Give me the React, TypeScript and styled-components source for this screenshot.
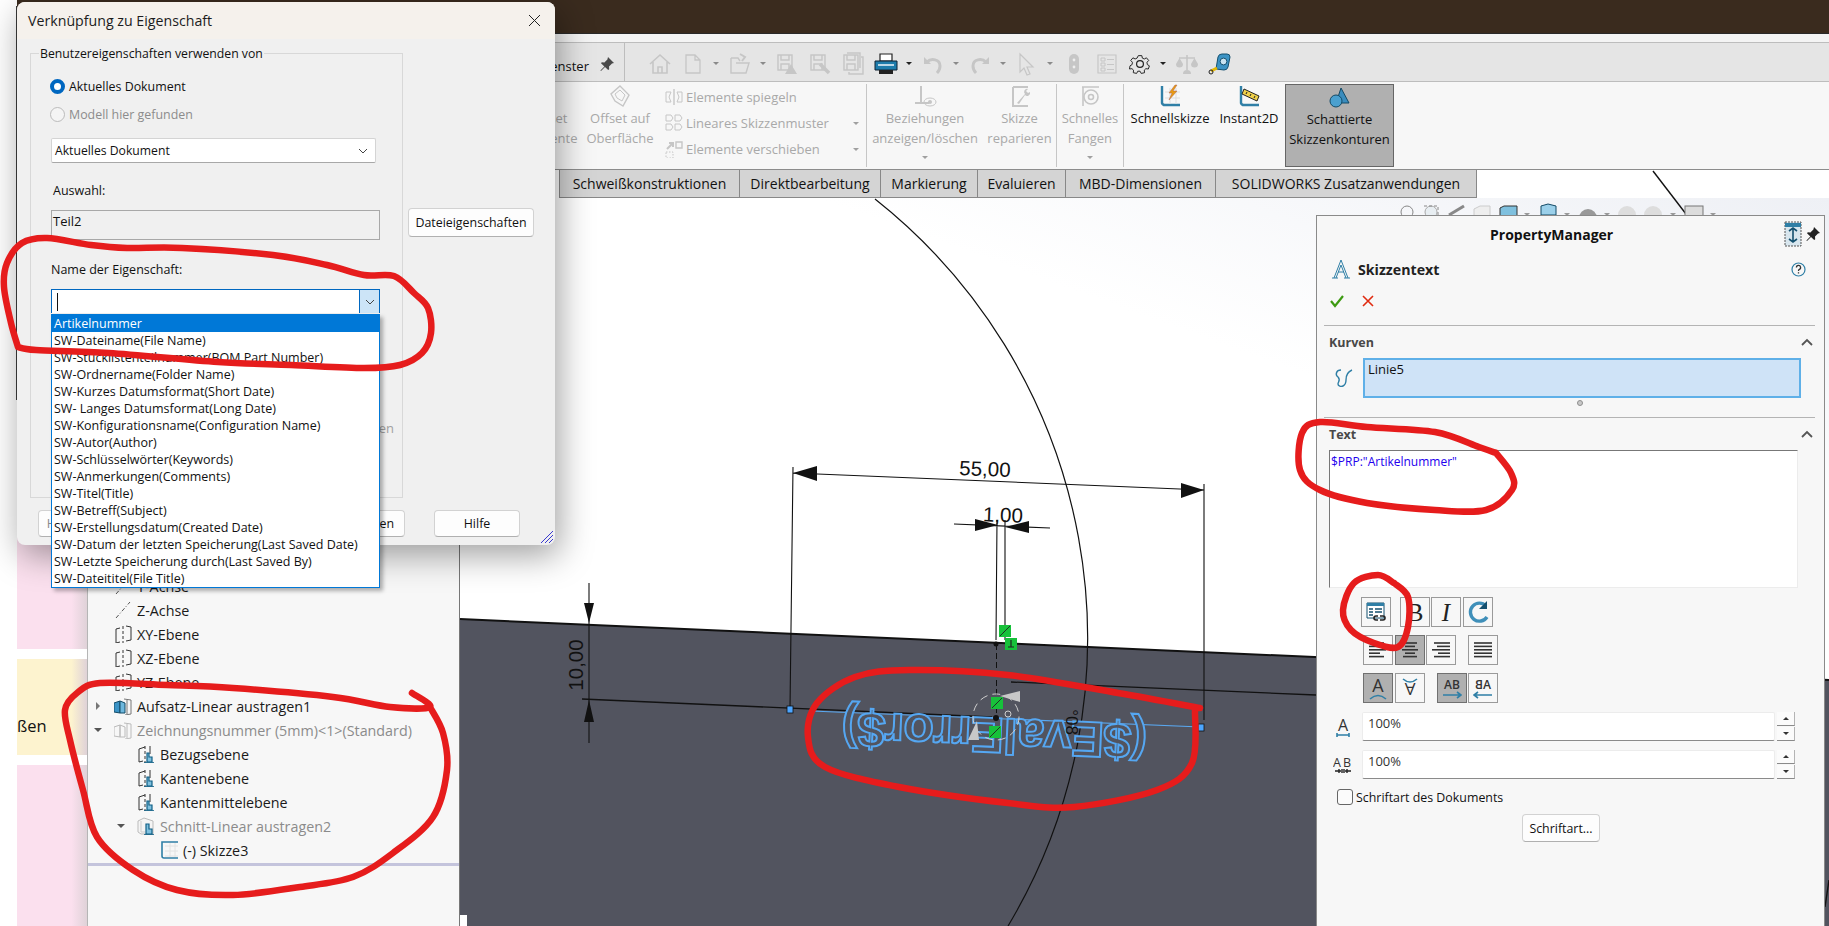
import React from 'react';
import styled, { createGlobalStyle } from 'styled-components';

const UI_FONT = `"Open Sans", "Noto Sans", sans-serif`;

const GlobalStyle = createGlobalStyle`
  html, body { margin: 0; padding: 0; background: #fff; }
  * { box-sizing: border-box; }
`;

const Page = styled.div`
  position: relative;
  display: flex;
  width: 1829px;
  height: 926px;
  overflow: hidden;
  background: #fff;
  font-family: ${UI_FONT};
  font-size: 13px;
  color: #111;
`;

const Margin = styled.div`
  flex: 0 0 17px;
  background: #fff;
`;

const Workspace = styled.div`
  flex: 1;
  display: flex;
  flex-direction: column;
  min-width: 0;
`;

const TopBar = styled.div`
  flex: 0 0 34px;
  background: #3a2b1e;
  border-bottom: 1px solid #2a2a2a;
`;

const Strip = styled.div`
  flex: 0 0 9px;
  background: #f4f4f4;
  border-bottom: 1px solid #bdbdbd;
`;

const QuickBar = styled.div`
  flex: 0 0 39px;
  display: flex;
  align-items: center;
  background: #e5e5e5;
  border-bottom: 1px solid #bdbdbd;
  padding: 3px 0 0 520px;
`;

const QuickLabel = styled.span`
  width: 52px;
  margin-top: 4px;
  text-align: right;
  white-space: nowrap;
  font-size: 13px;
`;

const PinSlot = styled.span`
  display: flex;
  justify-content: center;
  width: 35px;
`;

const QuickDivider = styled.span`
  align-self: stretch;
  width: 1px;
  margin: -3px 18px 0 0;
  background: #bdbdbd;
`;

const QuickSlot = styled.span`
  flex: 0 0 33px;
  display: flex;
  justify-content: center;
`;

const CaretSlot = styled.span<{ $color?: string }>`
  flex: 0 0 14px;
  display: flex;
  justify-content: center;
  &::before {
    content: '';
    border-left: 3px solid transparent;
    border-right: 3px solid transparent;
    border-top: 3px solid ${(p) => p.$color || '#8a8a8a'};
  }
`;

const Ribbon = styled.div`
  flex: 0 0 88px;
  display: flex;
  background: #f7f7f7;
  padding: 2px 0 0 501px;
  border-bottom: 1px solid #8c8c8c;
`;

const ToolButton = styled.div<{ $w: number; $sep?: boolean; $active?: boolean; $off?: boolean }>`
  flex: 0 0 ${(p) => p.$w}px;
  display: flex;
  flex-direction: column;
  align-items: center;
  height: 83px;
  text-align: center;
  line-height: 20px;
  font-size: 13px;
  white-space: nowrap;
  color: ${(p) => (p.$off ? '#a9a9a9' : '#111')};
  border-right: ${(p) => (p.$sep ? '1px solid #c6c6c6' : 'none')};
  ${(p) => p.$active && `
    background: #b0b0b0;
    border: 1px solid #666;
    margin-left: 3px;
  `}
`;

const ToolIcon = styled.div`
  height: 24px;
  display: flex;
  align-items: center;
  justify-content: center;
  flex-shrink: 0;
`;

const ToolCaret = styled.span`
  margin-top: 8px;
  border-left: 3px solid transparent;
  border-right: 3px solid transparent;
  border-top: 3px solid #a0a0a0;
`;

const ToolList = styled.div`
  flex: 0 0 207px;
  height: 83px;
  padding-left: 2px;
  border-right: 1px solid #c6c6c6;
`;

const ToolListRow = styled.div`
  display: flex;
  align-items: center;
  height: 26px;
  color: #a9a9a9;
  font-size: 13px;
  white-space: nowrap;
`;

const ToolListIcon = styled.span`
  flex: 0 0 24px;
  display: flex;
  justify-content: center;
`;

const ToolListText = styled.span`
  flex: 1;
`;

const ToolListCaret = styled.span`
  margin-right: 7px;
  border-left: 3px solid transparent;
  border-right: 3px solid transparent;
  border-top: 3px solid #a0a0a0;
`;

const TabStrip = styled.div`
  flex: 0 0 28px;
  display: flex;
  padding-left: 542px;
  background: #fff;
`;

const Tab = styled.div`
  display: flex;
  align-items: center;
  justify-content: center;
  background: #d4d4d4;
  border-left: 1px solid #888;
  border-bottom: 1px solid #888;
  font-size: 14px;
  white-space: nowrap;
  &:last-child { border-right: 1px solid #888; }
`;

const Body = styled.div`
  flex: 1;
  display: flex;
  min-height: 0;
`;

const LeftRail = styled.div`
  flex: 0 0 70px;
  display: flex;
  flex-direction: column;
  gap: 10px;
  background: #fff;
`;

const RailCard = styled.div<{ $h: number; $bg: string }>`
  flex: 0 0 ${(p) => p.$h}px;
  display: flex;
  align-items: center;
  overflow: hidden;
  background: linear-gradient(to right, ${(p) => p.$bg} 78%, #dfd2d8 100%);
`;

const RailText = styled.span`
  margin-top: 36px;
  font-size: 16.5px;
`;

const Tree = styled.div`
  flex: 0 0 373px;
  display: flex;
  flex-direction: column;
  padding-top: 376px;
  background: #f7f7f7;
  border-left: 1px solid #b5b5b5;
  border-right: 1px solid #777;
`;

const TreeRow = styled.div<{ $level?: number; $off?: boolean }>`
  display: flex;
  align-items: center;
  flex: 0 0 24px;
  padding-left: ${(p) => 4 + (p.$level || 0) * 23}px;
  font-size: 14.3px;
  white-space: nowrap;
  color: ${(p) => (p.$off ? '#8b8b8b' : '#1a1a1a')};
`;

const TreeArrow = styled.span<{ $open?: boolean; $hidden?: boolean }>`
  flex: 0 0 12px;
  display: flex;
  justify-content: center;
  margin-right: 10px;
  &::before {
    content: '';
    visibility: ${(p) => (p.$hidden ? 'hidden' : 'visible')};
    ${(p) => p.$open
      ? 'border-left: 4px solid transparent; border-right: 4px solid transparent; border-top: 4px solid #555;'
      : 'border-top: 4px solid transparent; border-bottom: 4px solid transparent; border-left: 4px solid #777;'}
  }
`;

const TreeIconSlot = styled.span`
  flex: 0 0 18px;
  display: flex;
  justify-content: center;
  margin-right: 5px;
`;

const TreeRule = styled.div`
  flex: 0 0 3px;
  margin-top: 1px;
  background: #c4c4dc;
`;

const CanvasArea = styled.div`
  flex: 1;
  background: linear-gradient(200deg, #eef0f5 0%, #fff 30%);
`;

const Drawing = styled.svg`
  position: absolute;
  left: 0;
  top: 0;
  pointer-events: none;
`;

/* floating PropertyManager over the graphics area */
const PropertyPanel = styled.aside`
  position: absolute;
  left: 1316px;
  top: 215px;
  width: 509px;
  height: 711px;
  display: flex;
  flex-direction: column;
  background: #f7f7f7;
  border: 1px solid #8a8a8a;
  border-bottom: none;
`;

const PanelHeader = styled.div`
  display: flex;
  align-items: center;
  height: 20px;
  margin-top: 8px;
  padding: 0 4px 0 173px;
  font-weight: 700;
  font-size: 14px;
`;

const PanelHeaderIcons = styled.div`
  margin-left: auto;
  display: flex;
  align-items: center;
  gap: 4px;
`;

const FeatureRow = styled.div`
  display: flex;
  align-items: center;
  height: 22px;
  margin-top: 14px;
  padding: 0 18px 0 15px;
  gap: 8px;
  font-weight: 700;
  font-size: 14.2px;
  color: #222;
`;

const HelpMark = styled.span`
  margin-left: auto;
  display: flex;
`;

const ActionRow = styled.div`
  display: flex;
  align-items: center;
  height: 20px;
  margin-top: 11px;
  padding-left: 13px;
  gap: 18px;
`;

const PanelRule = styled.div<{ $mt: number }>`
  height: 1px;
  flex-shrink: 0;
  margin: ${(p) => p.$mt}px 9px 0 7px;
  background: #b4b4b4;
`;

const SectionHead = styled.div`
  display: flex;
  align-items: center;
  justify-content: space-between;
  height: 18px;
  margin-top: 7px;
  padding: 0 11px 0 12px;
  font-weight: 700;
  font-size: 12.5px;
  color: #484848;
`;

const CurveRow = styled.div`
  display: flex;
  align-items: center;
  margin-top: 7px;
  padding-left: 16px;
  gap: 10px;
`;

const CurveList = styled.div`
  width: 438px;
  height: 40px;
  padding: 0 3px;
  line-height: 18px;
  background: #cfe3f7;
  border: 2px solid #5fb0e8;
  font-size: 13px;
`;

const SplitDot = styled.span`
  width: 6px;
  height: 6px;
  margin: 2px 0 0 260px;
  border: 1px solid #8f8f8f;
  border-radius: 50%;
  background: #c9c9c9;
`;

const TextBox = styled.div`
  width: 469px;
  height: 138px;
  margin: 7px 0 0 12px;
  padding: 1px 1px;
  background: #fff;
  border: 1px solid #ececec;
  border-top: 1px solid #777;
  border-left: 1px solid #777;
  font-size: 12px;
  line-height: 20px;
  color: #2200ee;
`;

const ToggleRow = styled.div<{ $mt: number; $pl: number }>`
  display: flex;
  margin-top: ${(p) => p.$mt}px;
  padding-left: ${(p) => p.$pl}px;
`;

const Toggle = styled.div<{ $ml?: number; $on?: boolean }>`
  flex: 0 0 30px;
  height: 30px;
  margin-left: ${(p) => p.$ml || 0}px;
  display: flex;
  align-items: center;
  justify-content: center;
  background: ${(p) => (p.$on ? '#b0b0b0' : '#f7f7f7')};
  border: 1px solid ${(p) => (p.$on ? '#707070' : '#9a9a9a')};
`;

const SerifGlyph = styled.span<{ $italic?: boolean }>`
  font-family: "Liberation Serif", serif;
  font-size: 25px;
  line-height: 1;
  color: #222;
  font-style: ${(p) => (p.$italic ? 'italic' : 'normal')};
`;

const SpinRow = styled.div<{ $mt: number }>`
  display: flex;
  align-items: stretch;
  height: 29px;
  margin-top: ${(p) => p.$mt}px;
`;

const SpinIcon = styled.span`
  flex: 0 0 45px;
  display: flex;
  align-items: center;
  justify-content: center;
  padding-left: 6px;
`;

const SpinInput = styled.div`
  width: 413px;
  padding: 1px 5px;
  background: #fff;
  border: 1px solid #ececec;
  border-bottom: 1px solid #8a8a8a;
  border-radius: 2px;
  font-size: 13px;
  color: #333;
`;

const SpinButtons = styled.div`
  width: 18px;
  margin-left: 2px;
  display: flex;
  flex-direction: column;
  gap: 1px;
`;

const SpinButton = styled.span<{ $up?: boolean }>`
  flex: 1;
  display: flex;
  align-items: center;
  justify-content: center;
  background: #fbfbfb;
  border-bottom: 1px solid #8a8a8a;
  border-right: 1px solid #b4b4b4;
  &::before {
    content: '';
    border-left: 3px solid transparent;
    border-right: 3px solid transparent;
    ${(p) => (p.$up ? 'border-bottom: 3px solid #333;' : 'border-top: 3px solid #333;')}
  }
`;

const CheckRow = styled.div`
  display: flex;
  align-items: center;
  height: 16px;
  margin-top: 10px;
  padding-left: 20px;
  gap: 3px;
  font-size: 12.4px;
`;

const CheckBox = styled.span`
  width: 16px;
  height: 16px;
  background: #fbfbfb;
  border: 1px solid #666;
  border-radius: 3px;
`;

const WinButton = styled.div<{ $w: number; $h?: number; $ml?: number; $off?: boolean }>`
  flex: 0 0 ${(p) => p.$w}px;
  width: ${(p) => p.$w}px;
  height: ${(p) => p.$h || 27}px;
  margin-left: ${(p) => p.$ml || 0}px;
  display: flex;
  align-items: center;
  justify-content: center;
  overflow: hidden;
  white-space: nowrap;
  background: #fdfdfd;
  border: 1px solid #d2d2d2;
  border-bottom-color: #b0b0b0;
  border-radius: 4px;
  font-size: 12.4px;
  color: ${(p) => (p.$off ? '#8a8a8a' : '#111')};
`;

/* dialog window lying over the application */
const Dialog = styled.section`
  position: absolute;
  left: 17px;
  top: 2px;
  width: 538px;
  height: 543px;
  display: flex;
  flex-direction: column;
  background: #f0f0f0;
  border-radius: 8px;
  box-shadow: 4px 10px 34px rgba(0, 0, 0, 0.38);
  &::before {
    content: '';
    position: absolute;
    left: -1px;
    top: 4px;
    width: 1px;
    height: 394px;
    background: #333;
  }
`;

const TitleBar = styled.header`
  flex: 0 0 37px;
  display: flex;
  align-items: center;
  justify-content: space-between;
  padding: 0 14px 0 11px;
  background: #f5f1ec;
  border-radius: 8px 8px 0 0;
  font-size: 14.2px;
  color: #1c1c1c;
`;

const DialogMain = styled.div`
  display: flex;
  align-items: flex-start;
  padding: 14px 0 0 13px;
`;

const GroupBox = styled.div`
  position: relative;
  flex: 0 0 373px;
  height: 445px;
  padding: 22px 0 0 20px;
  border: 1px solid #d8d8d8;
`;

const GroupLegend = styled.span`
  position: absolute;
  left: 8px;
  top: -9px;
  padding: 0 1px;
  line-height: 18px;
  background: #f0f0f0;
  font-size: 12.25px;
  white-space: nowrap;
`;

const RadioRow = styled.div<{ $mt?: number; $off?: boolean }>`
  display: flex;
  align-items: center;
  height: 20px;
  margin-top: ${(p) => p.$mt || 0}px;
  margin-left: -1px;
  gap: 4px;
  font-size: 12.4px;
  color: ${(p) => (p.$off ? '#8c8c8c' : '#111')};
`;

const Radio = styled.span<{ $on?: boolean }>`
  flex: 0 0 15px;
  height: 15px;
  border-radius: 50%;
  background: ${(p) => (p.$on ? '#fff' : '#f4f4f4')};
  border: ${(p) => (p.$on ? '4px solid #0067c0' : '1px solid #bbb')};
`;

const SelectBox = styled.div`
  display: flex;
  align-items: center;
  justify-content: space-between;
  width: 325px;
  height: 25px;
  margin-top: 14px;
  padding: 0 6px 0 3px;
  background: #fff;
  border: 1px solid #d4d4d4;
  border-bottom-color: #a8a8a8;
  border-radius: 2px;
  font-size: 12.2px;
`;

const FieldLabel = styled.div<{ $mt: number; $pl?: number }>`
  height: 20px;
  line-height: 20px;
  margin-top: ${(p) => p.$mt}px;
  padding-left: ${(p) => p.$pl || 0}px;
  font-size: 12.5px;
`;

const ReadOnlyBox = styled.div`
  width: 329px;
  height: 30px;
  margin-top: 9px;
  padding: 0 1px;
  line-height: 20px;
  border: 1px solid #a8a8a8;
  font-size: 13px;
`;

const ComboWrap = styled.div`
  position: relative;
  display: flex;
  width: 329px;
  height: 24px;
  margin-top: 9px;
  background: #fff;
  border: 1px solid #0067c0;
  border-bottom: none;
`;

const ComboField = styled.div`
  flex: 1;
  padding: 3px 0 0 5px;
`;

const Caret = styled.span`
  display: block;
  width: 1px;
  height: 18px;
  background: #111;
`;

const ComboButton = styled.span`
  flex: 0 0 20px;
  display: flex;
  align-items: center;
  justify-content: center;
  background: #cce4f7;
  border-left: 1px solid #0067c0;
`;

/* open drop-down of the combo box */
const ComboList = styled.ul`
  position: absolute;
  left: -1px;
  top: 24px;
  width: 329px;
  margin: 0;
  padding: 0;
  list-style: none;
  background: #fff;
  border: 1px solid #0078d7;
  box-shadow: 3px 3px 4px rgba(0, 0, 0, 0.3);
  z-index: 2;
`;

const ComboItem = styled.li<{ $on?: boolean }>`
  height: 17px;
  line-height: 17px;
  padding-left: 2px;
  font-size: 12.5px;
  white-space: nowrap;
  color: ${(p) => (p.$on ? '#fff' : '#111')};
  background: ${(p) => (p.$on ? '#0078d7' : 'transparent')};
`;

const HiddenLabel = styled.div`
  position: absolute;
  right: 8px;
  top: 365px;
  color: #a0a0a0;
  font-size: 13px;
`;

const SideColumn = styled.div`
  padding: 155px 0 0 5px;
`;

const DialogFooter = styled.div`
  display: flex;
  padding: 12px 0 0 21px;
`;

const Grip = styled.svg`
  position: absolute;
  right: 1px;
  bottom: 1px;
`;

/* hand-drawn red marks above everything, drop-down included */
const Annotations = styled.svg`
  position: absolute;
  left: 0;
  top: 0;
  z-index: 3;
  pointer-events: none;
`;

// smooth line through hand-picked points (catmull-rom)
const smooth = (pts: number[][]) => {
  let d = `M${pts[0][0]} ${pts[0][1]}`;
  for (let i = 0; i < pts.length - 1; i++) {
    const p0 = pts[i - 1] || pts[i];
    const p1 = pts[i];
    const p2 = pts[i + 1];
    const p3 = pts[i + 2] || p2;
    const c1x = p1[0] + (p2[0] - p0[0]) / 6;
    const c1y = p1[1] + (p2[1] - p0[1]) / 6;
    const c2x = p2[0] - (p3[0] - p1[0]) / 6;
    const c2y = p2[1] - (p3[1] - p1[1]) / 6;
    d += ` C${c1x} ${c1y} ${c2x} ${c2y} ${p2[0]} ${p2[1]}`;
  }
  return d;
};

const RED_MARKS = [
  [[18, 347], [36, 350], [109, 353], [218, 362], [291, 365], [364, 368], [400, 365], [422, 353], [431, 333], [428, 308], [414, 293], [394, 276], [364, 275], [327, 265], [273, 255], [182, 248], [127, 248], [91, 245], [47, 238], [22, 243], [7, 263], [4, 287], [11, 323], [18, 347]],
  [[412, 693], [430, 707], [390, 707], [333, 697], [233, 688], [167, 685], [100, 683], [77, 693], [65, 710], [70, 740], [83, 790], [97, 837], [133, 870], [177, 890], [233, 895], [300, 887], [353, 877], [393, 853], [433, 817], [447, 770], [443, 733], [430, 707]],
  [[1200, 708], [1118, 693], [1008, 675], [910, 670], [855, 677], [817, 703], [808, 737], [825, 767], [899, 787], [1008, 803], [1074, 807], [1157, 790], [1192, 763], [1195, 710]],
  [[1496, 453], [1479, 447], [1435, 432], [1367, 427], [1320, 422], [1302, 433], [1300, 470], [1320, 490], [1367, 503], [1435, 510], [1486, 510], [1512, 490], [1511, 473], [1496, 453]],
  [[1394, 583], [1378, 575], [1354, 583], [1343, 610], [1351, 630], [1374, 643], [1398, 647], [1408, 627], [1408, 597], [1394, 583]],
];

const COMBO_ITEMS = [
  'Artikelnummer',
  'SW-Dateiname(File Name)',
  'SW-Stücklistenteilnummer(BOM Part Number)',
  'SW-Ordnername(Folder Name)',
  'SW-Kurzes Datumsformat(Short Date)',
  'SW- Langes Datumsformat(Long Date)',
  'SW-Konfigurationsname(Configuration Name)',
  'SW-Autor(Author)',
  'SW-Schlüsselwörter(Keywords)',
  'SW-Anmerkungen(Comments)',
  'SW-Titel(Title)',
  'SW-Betreff(Subject)',
  'SW-Erstellungsdatum(Created Date)',
  'SW-Datum der letzten Speicherung(Last Saved Date)',
  'SW-Letzte Speicherung durch(Last Saved By)',
  'SW-Dateititel(File Title)',
];

const TABS: [string, number][] = [
  ['Schweißkonstruktionen', 180],
  ['Direktbearbeitung', 141],
  ['Markierung', 97],
  ['Evaluieren', 88],
  ['MBD-Dimensionen', 150],
  ['SOLIDWORKS Zusatzanwendungen', 262],
];

const GREY = '#c6c6c6';
const BLUE = '#2f7fa6';

const Ic: React.FC<{ s?: number; w?: number; children: React.ReactNode }> = ({ s = 24, w, children }) => (
  <svg width={w || s} height={s} viewBox={`0 0 ${w || s} ${s}`} fill="none">{children}</svg>
);

const HomeIcon = () => (
  <Ic><path d="M2 12 12 3l10 9M5 10v11h14V10M10 21v-6h4v6" stroke={GREY} strokeWidth="1.6" /></Ic>
);
const DocIcon = () => (
  <Ic><path d="M5 3h9l5 5v13H5zM14 3v5h5" stroke={GREY} strokeWidth="1.3" /></Ic>
);
const OpenIcon = () => (
  <Ic><path d="M3 6v15h15l3-10H8M3 6h7l2 3" stroke={GREY} strokeWidth="1.4" /><path d="M12 2l5 3-3 4" stroke={GREY} strokeWidth="2" /></Ic>
);
const SaveIcon: React.FC<{ mark: 'warn' | 'pen' | 'stack' }> = ({ mark }) => (
  <Ic>
    <path d="M3 3h14v15H3zM6 3v5h8V3M6 18v-6h8v6" stroke={GREY} strokeWidth="1.4" />
    {mark === 'warn' && <path d="M16 12l6 10H10z" fill={GREY} />}
    {mark === 'pen' && <path d="M12 12l9 9" stroke={GREY} strokeWidth="3.5" />}
    {mark === 'stack' && <path d="M20 5h2v17H8v-2M6 1h13v15" stroke={GREY} strokeWidth="1.4" />}
  </Ic>
);
const PrintIcon = () => (
  <Ic>
    <path d="M6 2h12v7H6z" fill="#fff" stroke="#222" strokeWidth="1.2" />
    <path d="M1 9h22v9H1z" fill="#1e7cab" stroke="#123" strokeWidth="1" />
    <path d="M4 13h16" stroke="#fff" strokeWidth="1.4" />
    <path d="M5 18h14v4H5z" fill="#222" />
  </Ic>
);
const UndoIcon: React.FC<{ flip?: boolean }> = ({ flip }) => (
  <Ic>
    <g transform={flip ? 'translate(24 0) scale(-1 1)' : undefined}>
      <path d="M3 5v7h7z" fill={GREY} />
      <path d="M6 10c4-4 13-3 13 4 0 3-1 5-3 7" stroke={GREY} strokeWidth="3" />
    </g>
  </Ic>
);
const CursorIcon = () => (
  <Ic><path d="M5 2l13 13h-6l3 7-3 1-3-7-4 4z" stroke={GREY} strokeWidth="1.2" /></Ic>
);
const MouseIcon = () => (
  <Ic s={24} w={14}>
    <rect x="2" y="2" width="10" height="20" rx="5" fill={GREY} />
    <circle cx="7" cy="8" r="1.4" fill="#eee" />
    <circle cx="7" cy="15" r="1.4" fill="#eee" />
  </Ic>
);
const ListIcon = () => (
  <Ic>
    <path d="M3 3h18v18H3z" stroke={GREY} strokeWidth="1.2" />
    <path d="M6 6h4v3H6zM6 11h4v3H6zM6 16h4v3H6z" stroke={GREY} />
    <path d="M12 7.5h7M12 12.5h7M12 17.5h7" stroke={GREY} />
  </Ic>
);
const GearIcon = () => (
  <Ic>
    <path d="M10 3h4l.6 2.8 2.2 1 2.5-1.3 2.5 3-1.9 2 .3 2.6 2.4 1.5-1.2 3.6-2.8-.4-1.8 1.7.3 2.9-3.8.8-1.3-2.5h-2.6l-1.3 2.5-3.8-.8.3-2.9-1.8-1.7-2.8.4L.6 14.6 3 13.1l.3-2.6-1.9-2 2.5-3 2.5 1.3 2.2-1z" stroke="#222" strokeWidth="1.1" transform="translate(1.5 1) scale(.88)" />
    <circle cx="12" cy="12" r="3.4" stroke="#222" strokeWidth="1.2" />
  </Ic>
);
const ScaleIcon = () => (
  <Ic>
    <path d="M12 3v15M4 6h16" stroke={GREY} strokeWidth="1.6" />
    <path d="M1 12a3.5 3.5 0 0 0 7 0l-3.5-6zM16 12a3.5 3.5 0 0 0 7 0l-3.5-6z" fill={GREY} />
    <path d="M8 22a4 4 0 0 1 8 0z" fill={GREY} />
  </Ic>
);
const TapeIcon = () => (
  <Ic>
    <path d="M8 17 10 5a4 4 0 0 1 4-3h5a3 3 0 0 1 3 3l-2 10a4 4 0 0 1-4 3z" fill="#3c93c4" stroke="#14506f" />
    <circle cx="15.5" cy="9.5" r="3.4" fill="#c9e3f1" stroke="#14506f" />
    <path d="M9 16 3 19" stroke="#e6b800" strokeWidth="3" />
    <circle cx="3" cy="20" r="2" stroke="#222" />
  </Ic>
);
const PinIcon: React.FC<{ c?: string }> = ({ c = '#4a4a4a' }) => (
  <svg width="14" height="14" viewBox="0 0 14 14" fill={c}>
    <path d="M8 0l6 6-2 .6-3 3 .2 2.6-1 .8L5 10l-4 4-.6-.6 4-4L1 6.2l.8-1 2.6.2 3-3z" />
  </svg>
);

const OffsetSurfaceIcon = () => (
  <Ic><path d="M12 2l9 9-6 11-8-5-4-7z" stroke={GREY} strokeWidth="1.4" /><path d="M12 6l5 5-3 6-5-3-2-4z" stroke={GREY} /></Ic>
);
const MirrorIcon = () => (
  <Ic s={18}><path d="M9 1v16" stroke={GREY} strokeWidth="1.4" /><path d="M6 4H1v10h5l-2-5zM12 4h5v10h-5l2-5z" stroke={GREY} /></Ic>
);
const PatternIcon = () => (
  <Ic s={18}>
    {[[1, 1], [10, 1], [1, 10], [10, 10]].map(([x, y]) => (
      <path key={`${x}-${y}`} d={`M${x} ${y}h5l2 3-2 3h-5z`} stroke={GREY} />
    ))}
  </Ic>
);
const MoveIcon = () => (
  <Ic s={18}>
    <path d="M2 9l6-6M4 3h4v4" stroke={GREY} strokeWidth="2" />
    <path d="M11 2h6v6h-6z" stroke={GREY} strokeWidth="1.4" />
    <path d="M1 12h7v6H1z" stroke={GREY} strokeDasharray="1.5 1.5" />
  </Ic>
);
const RelationIcon = () => (
  <Ic><path d="M8 2v16M2 19h14" stroke={GREY} strokeWidth="2" /><ellipse cx="17" cy="18" rx="6" ry="4" stroke={GREY} /><circle cx="17" cy="18" r="2" fill={GREY} /></Ic>
);
const RepairIcon = () => (
  <Ic><path d="M5 3h15M5 3v19h15" stroke={GREY} strokeWidth="2" /><path d="M9 19l8-9a3 3 0 0 1 3-5l-2 2 2 2 2-1a3 3 0 0 1-5 3l-6 9z" fill={GREY} /></Ic>
);
const SnapIcon = () => (
  <Ic><path d="M4 3h17M5 3v19" stroke={GREY} strokeWidth="1.6" /><circle cx="13" cy="13" r="7" stroke={GREY} strokeWidth="1.6" /><circle cx="13" cy="13" r="2.5" stroke={GREY} strokeWidth="1.6" /></Ic>
);
const QuickSketchIcon = () => (
  <Ic>
    <path d="M4 2v17a3 3 0 0 0 3 2h15" stroke={BLUE} strokeWidth="2.4" />
    <path d="M7 8h15M7 14h15M12 4v16M18 4v16" stroke="#ddd" />
    <path d="M17 1l-6 8h3l-3 7 8-9h-4l4-6z" fill="#e99a10" stroke="#a65" strokeWidth=".5" />
  </Ic>
);
const Instant2DIcon = () => (
  <Ic>
    <path d="M4 2v17a3 3 0 0 0 3 2h15" stroke={BLUE} strokeWidth="2.4" />
    <path d="M7 5l15 7-2 5L5 10z" fill="#efd04a" stroke="#222" />
    <path d="M10 8l-1 2M14 10l-1 2M18 12l-1 2" stroke="#222" />
  </Ic>
);
const ShadedIcon = () => (
  <Ic>
    <path d="M13 3l8 15H8z" fill="#3a8cbd" stroke="#134a66" />
    <circle cx="8" cy="16" r="6" fill="#4aa0cf" stroke="#134a66" />
  </Ic>
);

const AxisIcon = () => (
  <Ic s={18}><path d="M2 17 16 1" stroke="#555" strokeDasharray="4 2 1 2" /></Ic>
);
const PlaneIcon = () => (
  <Ic s={18}>
    <path d="M6 3 2 4v14l4-1M12 1l5 1v13l-5 1" stroke="#333" />
    <path d="M9 1v17" stroke="#333" strokeDasharray="3 2" />
  </Ic>
);
const PlaneProfileIcon = () => (
  <Ic s={18}>
    <path d="M2 4l6-2M13 1v8M2 4v13l4-1" stroke="#333" />
    <path d="M8 1v17" stroke="#333" strokeDasharray="3 2" />
    <path d="M10 17V8h2v4h3v5z" fill="#7fc0de" stroke="#0f5f85" strokeWidth="1.2" />
    <path d="M7 18h10" stroke="#0f5f85" strokeWidth="1.6" />
  </Ic>
);
const BossIcon: React.FC<{ off?: boolean }> = ({ off }) => (
  <Ic s={18}>
    <path d="M0 6l6-2v12l-6-1z" fill={off ? 'none' : '#3a93c6'} stroke={off ? '#bbb' : '#134a66'} />
    <path d="M6 4l5 2v10H6z" fill={off ? 'none' : '#6db8de'} stroke={off ? '#bbb' : '#134a66'} />
    <path d="M10 2l7 1v14l-6 1M13 3v14" stroke={off ? '#bbb' : '#777'} />
  </Ic>
);
const CutIcon = () => (
  <Ic s={18}>
    <path d="M1 4l6-3 9 3v13H4l-3-2z" stroke="#bbb" fill="#f4f4f4" />
    <path d="M4 4v11h4" stroke="#ccc" />
    <path d="M9 17V7h3v5h3v5z" fill="#7fc0de" stroke="#0f5f85" strokeWidth="1.2" />
    <path d="M7 18h10" stroke="#0f5f85" strokeWidth="1.6" />
  </Ic>
);
const SketchIcon = () => (
  <Ic s={18}>
    <path d="M5 5h13M5 10h13M5 15h13M10 2v14M15 2v14" stroke="#e2e2e2" />
    <path d="M18 1H2v14a2 2 0 0 0 2 2h14" stroke={BLUE} strokeWidth="1.6" />
  </Ic>
);

const Chevron: React.FC<{ up?: boolean; c?: string }> = ({ up, c = '#555' }) => (
  <svg width="12" height="8" viewBox="0 0 12 8" fill="none">
    <path d={up ? 'M1 7l5-5 5 5' : 'M2 2l4 4 4-4'} stroke={c} strokeWidth={up ? 1.8 : 1} />
  </svg>
);

const SketchTextIcon = () => (
  <Ic s={20} w={18}>
    <path d="M0 19h6M12 19h6M9 1 2 19M9 1l7 18M9 6l-5 13M9 6l5 13M6 13h6" stroke={BLUE} strokeWidth="1" />
  </Ic>
);
const CollapseIcon = () => (
  <Ic s={26} w={18}>
    <rect x="1" y="1" width="16" height="24" fill="#d8e6ee" stroke="#555" strokeDasharray="2 1" />
    <path d="M1 2h16v4H1z" fill="#2f7fa6" />
    <path d="M9 7v14M5 10l4-3 4 3M5 18l4 3 4-3" stroke="#14506f" strokeWidth="1.6" />
  </Ic>
);
const HelpIcon = () => (
  <svg width="15" height="15" viewBox="0 0 15 15" fill="none">
    <circle cx="7.5" cy="7.5" r="6.5" stroke="#2f7fa6" strokeWidth="1.2" />
    <path d="M5.4 5.6A2.1 2.1 0 1 1 8 7.6c-.4.2-.5.6-.5 1.3M7.5 10.2v1.3" stroke="#333" strokeWidth="1.3" />
  </svg>
);
const CurveIcon = () => (
  <Ic s={20}>
    <path d="M8 2C3 2 2 7 5 9c3 3 0 5 0 7s3 3 5 2 3-3 3-6 1-8 6-10" stroke={BLUE} strokeWidth="1.4" />
  </Ic>
);
const LinkIcon = () => (
  <Ic s={22}>
    <path d="M2 2h17v15H2z" fill="#fff" stroke="#14506f" />
    <path d="M2 2h17v3H2z" fill="#2f7fa6" />
    <path d="M4 8h4M4 11h4M4 14h4M10 8h7M10 11h7" stroke="#14506f" strokeWidth="1.4" />
    <path d="M13 15h-2a2 2 0 0 0 0 4h2M15 15h3a2 2 0 0 1 0 4h-3" stroke="#222" strokeWidth="1.6" />
  </Ic>
);
const RotateIcon = () => (
  <Ic s={24}>
    <path d="M20 6a9 9 0 1 0 1 11" stroke="#3f8fb9" strokeWidth="3.4" />
    <path d="M21 1v8h-8z" fill="#14506f" />
  </Ic>
);
const AlignIcon: React.FC<{ lines: number[][]; c?: string }> = ({ lines, c = '#333' }) => (
  <Ic s={20}>
    {lines.map(([a, b], i) => (
      <path key={i} d={`M${a} ${3 + i * 3.4}H${b}`} stroke={c} strokeWidth="1.6" />
    ))}
  </Ic>
);
const ArcLetterIcon: React.FC<{ down?: boolean }> = ({ down }) => (
  <Ic s={24} w={20}>
    {down ? (
      <>
        <path d="M3 3q7 6 14 0" stroke={BLUE} strokeWidth="1.6" />
        <text x="10" y="-7" transform="scale(1 -1)" textAnchor="middle" fontFamily={UI_FONT} fontSize="17" fill="#333">A</text>
      </>
    ) : (
      <>
        <text x="10" y="16" textAnchor="middle" fontFamily={UI_FONT} fontSize="18" fill="#333">A</text>
        <path d="M2 23q8-7 16 0" stroke={BLUE} strokeWidth="1.6" />
      </>
    )}
  </Ic>
);
const DirLetterIcon: React.FC<{ back?: boolean }> = ({ back }) => (
  <Ic s={24} w={20}>
    {back ? (
      <text x="-10" y="13" transform="scale(-1 1)" textAnchor="middle" fontFamily={UI_FONT} fontSize="12" fontWeight="600" fill="#333">AB</text>
    ) : (
      <text x="10" y="13" textAnchor="middle" fontFamily={UI_FONT} fontSize="12" fontWeight="600" fill="#333">AB</text>
    )}
    <path d={back ? 'M1 19h18M5 16l-4 3 4 3' : 'M1 19h18M15 16l4 3-4 3'} stroke={BLUE} strokeWidth="1.6" />
  </Ic>
);
const WidthIcon = () => (
  <Ic s={20} w={14}>
    <text x="7" y="14" textAnchor="middle" fontFamily={UI_FONT} fontSize="16" fill="#333">A</text>
    <path d="M1 18h12M1 16v4M13 16v4" stroke={BLUE} strokeWidth="1.6" />
  </Ic>
);
const SpacingIcon = () => (
  <Ic s={20}>
    <text x="10" y="12" textAnchor="middle" fontFamily={UI_FONT} fontSize="12.5" letterSpacing="2" fill="#333">AB</text>
    <path d="M2 16h6M6 14v4M18 16h-6M14 14v4M9 14v4M11 14v4" stroke="#222" strokeWidth="1.4" />
  </Ic>
);
const SmallCheck = () => (
  <svg width="14" height="14" viewBox="0 0 14 14" fill="none">
    <path d="M1 7l4 5 8-10" stroke="#3d9a12" strokeWidth="2.2" />
  </svg>
);
const SmallCross = () => (
  <svg width="12" height="12" viewBox="0 0 12 12" fill="none">
    <path d="M1 1l10 10M11 1 1 11" stroke="#e02b10" strokeWidth="1.6" />
  </svg>
);

const RelationBadge: React.FC<{ x: number; y: number; perp?: boolean }> = ({ x, y, perp }) => (
  <g>
    <rect x={x} y={y} width="12" height="12" fill="#17c13a" />
    {perp ? (
      <path d={`M${x + 3} ${y + 9}h6M${x + 6} ${y + 2}v7`} stroke="#222" strokeWidth="1.2" />
    ) : (
      <path d={`M${x + 1} ${y + 11}l10-10M${x + 4} ${y + 8}l2-2`} stroke="#222" strokeWidth=".9" />
    )}
  </g>
);

const GraphicsDrawing = () => (
  <Drawing width="1829" height="926" viewBox="0 0 1829 926" fill="none">
    {/* part body */}
    <path d="M460 619 1829 680V926H460z" fill="#52545f" />
    <path d="M460 619 1829 680" stroke="#111" strokeWidth="2" />
    <rect x="460" y="915" width="7" height="11" fill="#fff" />
    <path d="M1011 682 1316 695" stroke="#111" strokeWidth="1.3" />

    {/* arcs */}
    <path d="M875 199A560 560 0 0 1 1008 926" stroke="#111" strokeWidth="1.2" />
    <path d="M1653 171 1686 214" stroke="#111" strokeWidth="1.4" />
    <path d="M1829 880 1825 907" stroke="#111" strokeWidth="1.4" />

    {/* view toolbar behind the panel */}
    <circle cx="1407" cy="212" r="6" stroke="#888" />
    <circle cx="1431" cy="212" r="6" stroke="#aaa" fill="#e8eef2" />
    <path d="M1424 206h14v9" stroke="#888" strokeDasharray="3 2" />
    <path d="M1449 215 1464 206" stroke="#888" strokeWidth="3" />
    <path d="M1474 215v-6l6-3h10v9" stroke="#ccc" fill="#eee" />
    <path d="M1500 215v-7l4-2h13v9" stroke="#333" fill="#7fc0de" />
    <path d="M1541 215v-9l7-2 8 2v9z" stroke="#134a66" fill="#9bd0ea" />
    <circle cx="1588" cy="218" r="9" fill="#999" />
    <circle cx="1627" cy="215" r="9" fill="#ddd" />
    <circle cx="1653" cy="215" r="9" fill="#ddd" />
    <rect x="1685" y="206" width="18" height="10" fill="#dcdcdc" stroke="#777" />
    {[1527, 1567, 1607, 1673, 1713].map((x) => (
      <path key={x} d={`M${x - 3} 213h6l-3 3z`} fill="#999" />
    ))}

    {/* dimension 55,00 */}
    <path d="M793 467 790 709M1204 484V720M793 473 1204 490" stroke="#111" strokeWidth="1.1" />
    <path d="M793 473 817 466v15zM1204 490 1181 483v15z" fill="#111" />
    <text x="985" y="476" textAnchor="middle" fontFamily="Liberation Sans, sans-serif" fontSize="20.5" fill="#111" transform="rotate(2.4 985 469)">55,00</text>

    {/* dimension 1,00 */}
    <path d="M954 524 1050 528M997 520 996 640M1005 520V640" stroke="#111" strokeWidth="1.1" />
    <path d="M998 525 975 519v12zM1005 527 1029 521v12z" fill="#111" />
    <text x="1003" y="522" textAnchor="middle" fontFamily="Liberation Sans, sans-serif" fontSize="20.5" fill="#111" transform="rotate(2.4 1003 515)">1,00</text>

    {/* dimension 10,00 */}
    <path d="M589 583V743" stroke="#111" strokeWidth="1.1" />
    <path d="M589 623 584 603h10zM589 700 584 722h10z" fill="#111" />
    <text x="583" y="665" textAnchor="middle" fontFamily="Liberation Sans, sans-serif" fontSize="20.5" fill="#111" transform="rotate(-90 583 665)">10,00</text>

    {/* sketch lines */}
    <path d="M582 699 992 717" stroke="#111" strokeWidth="1.3" />
    <path d="M811 711 1201 727" stroke="#5aa8f0" strokeWidth="1.2" />
    <path d="M996.5 644V720" stroke="#111" strokeDasharray="6 3" />
    <rect x="787" y="706" width="6" height="7" fill="#4da6ff" stroke="#111" strokeWidth=".8" />
    <rect x="1198" y="724" width="6" height="7" fill="#4da6ff" stroke="#111" strokeWidth=".8" />

    {/* mirrored text of the sketch */}
    <text
      x="0"
      y="0"
      transform="translate(995 718) rotate(182.5)"
      textAnchor="middle"
      textLength="306"
      fontFamily="Liberation Sans, sans-serif"
      fontSize="50"
      fontWeight="700"
      fill="#52545f"
      stroke="#55a7f2"
      strokeWidth="2"
    >
      ($EvalError$)
    </text>

    {/* handles */}
    <circle cx="996" cy="717" r="23" stroke="#cfcfcf" strokeDasharray="8 5" />
    <path d="M1000 696l20-5v11zM968 740l9-19 2 19z" fill="#c8c8c8" />
    <circle cx="1008" cy="714" r="3" stroke="#cfcfcf" />
    <circle cx="996" cy="644" r="2.5" fill="#111" />
    <circle cx="996" cy="718" r="3" fill="#111" />
    <text x="1066" y="722" textAnchor="middle" fontFamily="Liberation Sans, sans-serif" fontSize="17" fill="#111" transform="rotate(90 1066 722)">°08</text>
    <RelationBadge x={999} y={625} />
    <RelationBadge x={1005} y={638} perp />
    <RelationBadge x={991} y={697} />
    <RelationBadge x={989} y={726} />
  </Drawing>
);

const App: React.FC = () => (
  <Page>
    <GlobalStyle />
    <Margin />
    <Workspace>
      <TopBar />
      <Strip />
      <QuickBar>
        <QuickLabel>Fenster</QuickLabel>
        <PinSlot><PinIcon /></PinSlot>
        <QuickDivider />
        <QuickSlot><HomeIcon /></QuickSlot>
        <QuickSlot><DocIcon /></QuickSlot>
        <CaretSlot />
        <QuickSlot><OpenIcon /></QuickSlot>
        <CaretSlot />
        <QuickSlot><SaveIcon mark="warn" /></QuickSlot>
        <QuickSlot><SaveIcon mark="pen" /></QuickSlot>
        <QuickSlot><SaveIcon mark="stack" /></QuickSlot>
        <QuickSlot><PrintIcon /></QuickSlot>
        <CaretSlot $color="#222" />
        <QuickSlot><UndoIcon /></QuickSlot>
        <CaretSlot />
        <QuickSlot><UndoIcon flip /></QuickSlot>
        <CaretSlot />
        <QuickSlot><CursorIcon /></QuickSlot>
        <CaretSlot />
        <QuickSlot><MouseIcon /></QuickSlot>
        <QuickSlot><ListIcon /></QuickSlot>
        <QuickSlot><GearIcon /></QuickSlot>
        <CaretSlot $color="#222" />
        <QuickSlot><ScaleIcon /></QuickSlot>
        <QuickSlot><TapeIcon /></QuickSlot>
      </QuickBar>
      <Ribbon>
        <ToolButton $w={62} $off>
          <ToolIcon />
          Offset<br />Elemente
        </ToolButton>
        <ToolButton $w={80} $off>
          <ToolIcon><OffsetSurfaceIcon /></ToolIcon>
          Offset auf<br />Oberfläche
        </ToolButton>
        <ToolList>
          <ToolListRow><ToolListIcon><MirrorIcon /></ToolListIcon><ToolListText>Elemente spiegeln</ToolListText></ToolListRow>
          <ToolListRow><ToolListIcon><PatternIcon /></ToolListIcon><ToolListText>Lineares Skizzenmuster</ToolListText><ToolListCaret /></ToolListRow>
          <ToolListRow><ToolListIcon><MoveIcon /></ToolListIcon><ToolListText>Elemente verschieben</ToolListText><ToolListCaret /></ToolListRow>
        </ToolList>
        <ToolButton $w={116} $off>
          <ToolIcon><RelationIcon /></ToolIcon>
          Beziehungen<br />anzeigen/löschen
          <ToolCaret />
        </ToolButton>
        <ToolButton $w={74} $off $sep>
          <ToolIcon><RepairIcon /></ToolIcon>
          Skizze<br />reparieren
        </ToolButton>
        <ToolButton $w={67} $off $sep>
          <ToolIcon><SnapIcon /></ToolIcon>
          Schnelles<br />Fangen
          <ToolCaret />
        </ToolButton>
        <ToolButton $w={92}>
          <ToolIcon><QuickSketchIcon /></ToolIcon>
          Schnellskizze
        </ToolButton>
        <ToolButton $w={66}>
          <ToolIcon><Instant2DIcon /></ToolIcon>
          Instant2D
        </ToolButton>
        <ToolButton $w={109} $active>
          <ToolIcon><ShadedIcon /></ToolIcon>
          Schattierte<br />Skizzenkonturen
        </ToolButton>
      </Ribbon>
      <TabStrip>
        {TABS.map(([name, w]) => (
          <Tab key={name} style={{ width: w }}>{name}</Tab>
        ))}
      </TabStrip>
      <Body>
        <LeftRail>
          <RailCard $h={451} $bg="#fbe0ee" />
          <RailCard $h={96} $bg="#fdf3cf"><RailText>ßen</RailText></RailCard>
          <RailCard $h={161} $bg="#fbe0ee" />
        </LeftRail>
        <Tree>
          <TreeRow><TreeArrow $hidden /><TreeIconSlot><AxisIcon /></TreeIconSlot>Y-Achse</TreeRow>
          <TreeRow><TreeArrow $hidden /><TreeIconSlot><AxisIcon /></TreeIconSlot>Z-Achse</TreeRow>
          <TreeRow><TreeArrow $hidden /><TreeIconSlot><PlaneIcon /></TreeIconSlot>XY-Ebene</TreeRow>
          <TreeRow><TreeArrow $hidden /><TreeIconSlot><PlaneIcon /></TreeIconSlot>XZ-Ebene</TreeRow>
          <TreeRow><TreeArrow $hidden /><TreeIconSlot><PlaneIcon /></TreeIconSlot>YZ-Ebene</TreeRow>
          <TreeRow><TreeArrow /><TreeIconSlot><BossIcon /></TreeIconSlot>Aufsatz-Linear austragen1</TreeRow>
          <TreeRow $off><TreeArrow $open /><TreeIconSlot><BossIcon off /></TreeIconSlot>Zeichnungsnummer (5mm)&lt;1&gt;(Standard)</TreeRow>
          <TreeRow $level={1}><TreeArrow $hidden /><TreeIconSlot><PlaneProfileIcon /></TreeIconSlot>Bezugsebene</TreeRow>
          <TreeRow $level={1}><TreeArrow $hidden /><TreeIconSlot><PlaneProfileIcon /></TreeIconSlot>Kantenebene</TreeRow>
          <TreeRow $level={1}><TreeArrow $hidden /><TreeIconSlot><PlaneProfileIcon /></TreeIconSlot>Kantenmittelebene</TreeRow>
          <TreeRow $level={1} $off><TreeArrow $open /><TreeIconSlot><CutIcon /></TreeIconSlot>Schnitt-Linear austragen2</TreeRow>
          <TreeRow $level={2}><TreeArrow $hidden /><TreeIconSlot><SketchIcon /></TreeIconSlot>(-) Skizze3</TreeRow>
          <TreeRule />
        </Tree>
        <CanvasArea />
      </Body>
    </Workspace>

    <GraphicsDrawing />

    <PropertyPanel>
      <PanelHeader>
        PropertyManager
        <PanelHeaderIcons>
          <CollapseIcon />
          <PinIcon c="#222" />
        </PanelHeaderIcons>
      </PanelHeader>
      <FeatureRow>
        <SketchTextIcon />
        Skizzentext
        <HelpMark><HelpIcon /></HelpMark>
      </FeatureRow>
      <ActionRow>
        <SmallCheck />
        <SmallCross />
      </ActionRow>
      <PanelRule $mt={14} />
      <SectionHead>Kurven<Chevron up /></SectionHead>
      <CurveRow>
        <CurveIcon />
        <CurveList>Linie5</CurveList>
      </CurveRow>
      <SplitDot />
      <PanelRule $mt={11} />
      <SectionHead>Text<Chevron up /></SectionHead>
      <TextBox>$PRP:"Artikelnummer"</TextBox>
      <ToggleRow $mt={9} $pl={44}>
        <Toggle><LinkIcon /></Toggle>
        <Toggle $ml={9}><SerifGlyph>B</SerifGlyph></Toggle>
        <Toggle $ml={1}><SerifGlyph $italic>I</SerifGlyph></Toggle>
        <Toggle $ml={2}><RotateIcon /></Toggle>
      </ToggleRow>
      <ToggleRow $mt={8} $pl={46}>
        <Toggle><AlignIcon lines={[[1, 16], [1, 13], [1, 18], [1, 12], [1, 16]]} /></Toggle>
        <Toggle $ml={2} $on><AlignIcon lines={[[3, 17], [5, 15], [2, 18], [5, 15], [3, 17]]} /></Toggle>
        <Toggle $ml={1}><AlignIcon lines={[[3, 19], [6, 19], [1, 19], [7, 19], [3, 19]]} /></Toggle>
        <Toggle $ml={12}><AlignIcon lines={[[1, 19], [1, 19], [1, 19], [1, 19], [1, 19]]} /></Toggle>
      </ToggleRow>
      <ToggleRow $mt={8} $pl={46}>
        <Toggle $on><ArcLetterIcon /></Toggle>
        <Toggle $ml={2}><ArcLetterIcon down /></Toggle>
        <Toggle $ml={12} $on><DirLetterIcon /></Toggle>
        <Toggle $ml={1}><DirLetterIcon back /></Toggle>
      </ToggleRow>
      <SpinRow $mt={9}>
        <SpinIcon><WidthIcon /></SpinIcon>
        <SpinInput>100%</SpinInput>
        <SpinButtons><SpinButton $up /><SpinButton /></SpinButtons>
      </SpinRow>
      <SpinRow $mt={9}>
        <SpinIcon><SpacingIcon /></SpinIcon>
        <SpinInput>100%</SpinInput>
        <SpinButtons><SpinButton $up /><SpinButton /></SpinButtons>
      </SpinRow>
      <CheckRow>
        <CheckBox />
        Schriftart des Dokuments
      </CheckRow>
      <ToggleRow $mt={9} $pl={205}>
        <WinButton $w={78} $h={28}>Schriftart...</WinButton>
      </ToggleRow>
    </PropertyPanel>

    <Dialog>
      <TitleBar>
        Verknüpfung zu Eigenschaft
        <svg width="13" height="13" viewBox="0 0 13 13" fill="none">
          <path d="M1 1l11 11M12 1 1 12" stroke="#222" strokeWidth="1" />
        </svg>
      </TitleBar>
      <DialogMain>
        <GroupBox>
          <GroupLegend>Benutzereigenschaften verwenden von</GroupLegend>
          <RadioRow><Radio $on />Aktuelles Dokument</RadioRow>
          <RadioRow $mt={8} $off><Radio />Modell hier gefunden</RadioRow>
          <SelectBox>Aktuelles Dokument<Chevron c="#444" /></SelectBox>
          <FieldLabel $mt={18} $pl={2}>Auswahl:</FieldLabel>
          <ReadOnlyBox>Teil2</ReadOnlyBox>
          <FieldLabel $mt={20}>Name der Eigenschaft:</FieldLabel>
          <ComboWrap>
            <ComboField><Caret /></ComboField>
            <ComboButton><Chevron c="#444" /></ComboButton>
            <ComboList>
              {COMBO_ITEMS.map((item, i) => (
                <ComboItem key={item} $on={i === 0}>{item}</ComboItem>
              ))}
            </ComboList>
          </ComboWrap>
          <HiddenLabel>anzeigen</HiddenLabel>
        </GroupBox>
        <SideColumn>
          <WinButton $w={126} $h={29}>Dateieigenschaften</WinButton>
        </SideColumn>
      </DialogMain>
      <DialogFooter>
        <WinButton $w={84} $off>Hinzufügen</WinButton>
        <WinButton $w={85} $ml={198}>Abbrechen</WinButton>
        <WinButton $w={86} $ml={29}>Hilfe</WinButton>
      </DialogFooter>
      <Grip width="14" height="14" viewBox="0 0 14 14" fill="none">
        <path d="M13 1 1 13M13 5 5 13M13 9l-4 4" stroke="#3a3ad0" strokeWidth="1" />
      </Grip>
    </Dialog>

    <Annotations width="1829" height="926" viewBox="0 0 1829 926" fill="none">
      {RED_MARKS.map((pts, i) => (
        <path key={i} d={smooth(pts)} stroke="#e61c1c" strokeWidth="6.5" strokeLinecap="round" strokeLinejoin="round" />
      ))}
    </Annotations>
  </Page>
);

export default App;
